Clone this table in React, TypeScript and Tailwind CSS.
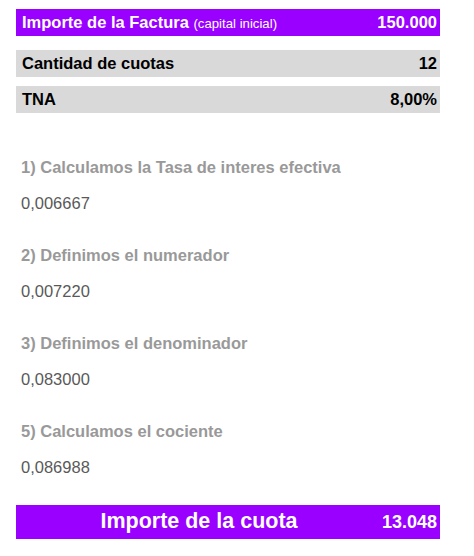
import React from 'react';

const steps = [
  { title: '1) Calculamos la Tasa de interes efectiva', value: '0,006667' },
  { title: '2) Definimos el numerador', value: '0,007220' },
  { title: '3) Definimos el denominador', value: '0,083000' },
  { title: '5) Calculamos el cociente', value: '0,086988' },
];

const App: React.FC = () => {
  return (
    <div className="w-[474px] h-[556px] bg-white px-4 pt-[9px] font-['Liberation_Sans',Arial,sans-serif]">
      {/* INPUTS */}
      <div className="w-[424px] h-[27px] bg-[#9900ff] text-white flex items-center justify-between pl-[6px] pr-[3px]">
        <span className="text-[16.5px] font-bold leading-none">
          Importe de la Factura <span className="text-[13.2px] font-normal">(capital inicial)</span>
        </span>
        <span className="text-[16.5px] font-bold leading-none">150.000</span>
      </div>

      <div className="mt-[14px] w-[424px] h-[27px] bg-[#d9d9d9] text-black flex items-center justify-between pl-[6px] pr-[3px] text-[16.5px] font-bold leading-none">
        <span>Cantidad de cuotas</span>
        <span>12</span>
      </div>

      <div className="mt-[9px] w-[424px] h-[27px] bg-[#d9d9d9] text-black flex items-center justify-between pl-[6px] pr-[3px] text-[16.5px] font-bold leading-none">
        <span>TNA</span>
        <span>8,00%</span>
      </div>

      {/* PASOS */}
      <div className="pt-[45px] pl-[5px]">
        {steps.map((s, i) => (
          <div key={i} className={i > 0 ? 'mt-[34px]' : ''}>
            <p className="text-[16.5px] font-bold text-[#999999] leading-[18px]">{s.title}</p>
            <p className="mt-[18px] text-[16.5px] text-[#595959] leading-[18px]">{s.value}</p>
          </div>
        ))}
      </div>

      {/* RESULTADO */}
      <div className="mt-[29px] w-[424px] h-[34px] bg-[#9900ff] text-white flex items-center pr-[3px]">
        <span className="flex-1 text-center text-[21.5px] font-bold leading-none">Importe de la cuota</span>
        <span className="text-[18px] font-bold leading-none">13.048</span>
      </div>
    </div>
  );
};

export default App;
